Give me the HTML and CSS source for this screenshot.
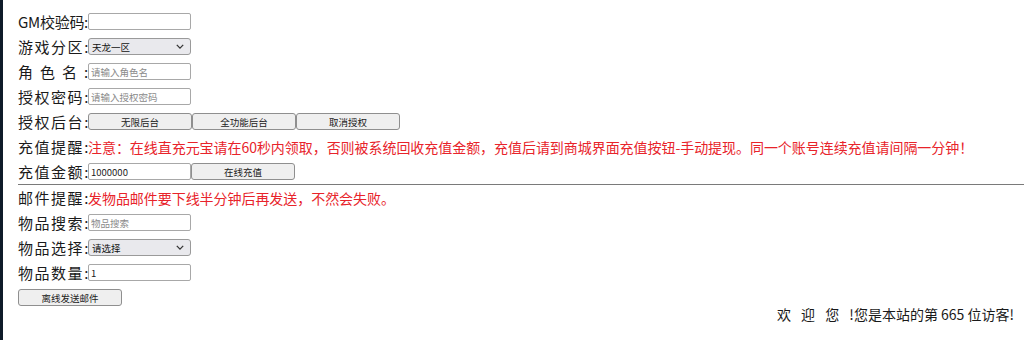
FILE: index.html
```html
<!DOCTYPE html>
<html lang="zh">
<head>
<meta charset="utf-8">
<title>GM</title>
<link rel="stylesheet" href="styles.css">
</head>
<body>
<div class="page">
  <div class="form">
    <div class="row"><span class="label">GM校验码:</span><input class="field" type="text"></div>
    <div class="row"><span class="label">游戏分区:</span><div class="select"><span>天龙一区</span><svg class="chev" viewBox="0 0 10 6" width="8" height="5"><path d="M1 1 L5 5 L9 1" fill="none" stroke="#333" stroke-width="1.6"/></svg></div></div>
    <div class="row"><span class="label">角 色 名 :</span><input class="field" type="text" placeholder="请输入角色名"></div>
    <div class="row"><span class="label">授权密码:</span><input class="field" type="text" placeholder="请输入授权密码"></div>
    <div class="row"><span class="label">授权后台:</span><button class="btn">无限后台</button><button class="btn">全功能后台</button><button class="btn">取消授权</button></div>
    <div class="row"><span class="label">充值提醒:</span><span class="red">注意：在线直充元宝请在60秒内领取，否则被系统回收充值金额，充值后请到商城界面充值按钮-手动提现。同一个账号连续充值请间隔一分钟！</span></div>
    <div class="row"><span class="label">充值金额:</span><input class="field" type="text" value="1000000"><button class="btn">在线充值</button></div>
    <div class="rule"></div>
    <div class="row"><span class="label">邮件提醒:</span><span class="red">发物品邮件要下线半分钟后再发送，不然会失败。</span></div>
    <div class="row"><span class="label">物品搜索:</span><input class="field" type="text" placeholder="物品搜索"></div>
    <div class="row"><span class="label">物品选择:</span><div class="select"><span>请选择</span><svg class="chev" viewBox="0 0 10 6" width="8" height="5"><path d="M1 1 L5 5 L9 1" fill="none" stroke="#333" stroke-width="1.6"/></svg></div></div>
    <div class="row"><span class="label">物品数量:</span><input class="field" type="text" value="1"></div>
    <div class="row"><button class="btn send">离线发送邮件</button></div>
  </div>
  <div class="welcome"><span class="greet">欢 迎 您 </span>!您是本站的第 665 位访客!</div>
</div>
</body>
</html>
```
FILE: styles.css
```css
html, body {
  margin: 0;
  padding: 0;
  background: #fff;
}
body {
  font-family: "Microsoft YaHei", "Noto Sans CJK SC", "Noto Sans", sans-serif;
  color: #1a1a1a;
  width: 1024px;
  height: 340px;
  overflow: hidden;
}
.page {
  border-left: 3px solid #0e1b29;
  height: 340px;
  box-sizing: border-box;
  padding-top: 9px;
}
.form {
  padding-left: 15px;
}
.row {
  display: flex;
  align-items: center;
  height: 25px;
}
.label {
  display: inline-block;
  width: 70px;
  font-size: 15px;
  line-height: 25px;
  text-align: justify;
  text-align-last: justify;
  white-space: nowrap;
  letter-spacing: -0.3px;
}
.field {
  box-sizing: border-box;
  width: 103px;
  height: 17px;
  margin: 0;
  padding: 0 2px;
  border: 1px solid #a8a8a8;
  border-radius: 2px;
  background: #fff;
  font-family: "Noto Sans CJK SC", sans-serif;
  font-size: 9.5px;
  color: #222;
  outline: none;
}
.field::placeholder {
  color: #8a8a8a;
}
.select {
  box-sizing: border-box;
  width: 103px;
  height: 17px;
  display: flex;
  align-items: center;
  justify-content: space-between;
  padding: 0 6px 0 3px;
  border: 1px solid #9a9a9a;
  border-radius: 3px;
  background: #e9e9ed;
  font-family: "Noto Sans CJK SC", sans-serif;
  font-size: 9.5px;
  color: #111;
}
.btn {
  box-sizing: border-box;
  width: 104px;
  height: 17px;
  margin: 0;
  padding: 0;
  border: 1px solid #8f8f8f;
  border-radius: 3px;
  background: #efefef;
  font-family: "Noto Sans CJK SC", sans-serif;
  font-size: 9.5px;
  color: #222;
}
.send {
  width: 104px;
}
.red {
  color: #e8232a;
  font-size: 14px;
  white-space: nowrap;
  letter-spacing: -0.05px;
}
.rule {
  height: 0;
  border-top: 1px solid #7a7a7a;
}
.welcome {
  text-align: right;
  padding-right: 10px;
  margin-top: -6px;
  font-size: 14px;
  color: #1a1a1a;
  font-family: "Noto Sans CJK SC", sans-serif;
}
.greet {
  word-spacing: 7px;
}
```
